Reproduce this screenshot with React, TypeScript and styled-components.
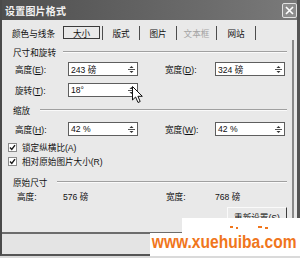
import React from "react";
import styled, { createGlobalStyle } from "styled-components";

const GlobalStyle = createGlobalStyle`
  html, body {
    margin: 0;
    padding: 0;
    background: #dadada;
  }
  body {
    font-family: "Liberation Sans", "Noto Sans CJK SC", sans-serif;
    color: #111;
  }
`;

const Window = styled.div`
  position: relative;
  width: 300px;
  height: 256px;
  box-sizing: border-box;
  background: #e9e9e9;
  border-left: 2px solid #4a4a4a;
  border-right: 3px solid #555;
  border-bottom: 2px solid #555;
  display: flex;
  flex-direction: column;
`;

const TitleBar = styled.div`
  height: 20px;
  flex: none;
  display: flex;
  align-items: center;
  justify-content: space-between;
  padding-left: 3px;
  background: linear-gradient(to right, #4f4f4f, #6c6c6c 70%, #7a7a7a);
`;

const Title = styled.span`
  font-size: 10px;
  font-weight: bold;
  color: #f2f2f2;
  letter-spacing: 0.2px;
`;

const CloseButton = styled.div`
  width: 15px;
  height: 15px;
  box-sizing: border-box;
  border: 1px solid #e2e2e2;
  border-radius: 2px;
  background: #8d8d8d;
  display: flex;
  align-items: center;
  justify-content: center;
`;

const Body = styled.div`
  padding: 0 3px 0 6px;
`;

const TabRow = styled.div`
  display: flex;
  height: 14px;
  margin-top: 6px;
  padding-left: 4px;
  font-size: 8.6px;
`;

const Tab = styled.div<{ $w: number; $sep?: boolean; $off?: boolean; $left?: boolean }>`
  width: ${(p) => p.$w}px;
  box-sizing: border-box;
  display: flex;
  align-items: center;
  justify-content: ${(p) => (p.$left ? "flex-start" : "center")};
  border-right: ${(p) => (p.$sep ? "1px solid #4c4c4c" : "none")};
  color: ${(p) => (p.$off ? "#a4a4a4" : "#111")};
`;

const ActiveBox = styled.div`
  width: 37px;
  height: 13px;
  margin-right: 2px;
  box-sizing: border-box;
  border: 1px solid #3a3a3a;
  display: flex;
  align-items: center;
  justify-content: center;
  align-self: flex-start;
`;

const Panel = styled.div`
  height: 192px;
  box-sizing: border-box;
  padding: 7px 5px 0 0;
  border-right: 2px solid #8a8a8a;
  display: flex;
  flex-direction: column;
`;

const SectionTitle = styled.div<{ $top?: number; $gap?: number }>`
  display: flex;
  align-items: center;
  height: 10px;
  margin-top: ${(p) => p.$top ?? 0}px;
  padding-left: 5px;
  font-size: 8.6px;

  &::after {
    content: "";
    flex: 1;
    margin-left: ${(p) => p.$gap ?? 8}px;
    border-top: 1px solid #a0a0a0;
    border-bottom: 1px solid #fafafa;
  }
`;

const FieldGrid = styled.div<{ $top: number }>`
  display: grid;
  grid-template-columns: 53px 70px 27px 50px 70px;
  grid-auto-rows: 14px;
  row-gap: 7px;
  margin-top: ${(p) => p.$top}px;
  padding-left: 7px;
`;

const Label = styled.span<{ $col?: number }>`
  grid-column: ${(p) => p.$col ?? "auto"};
  align-self: center;
  font-size: 8.6px;
  white-space: nowrap;
`;

const SpinBox = styled.div<{ $col?: number }>`
  grid-column: ${(p) => p.$col ?? "auto"};
  display: flex;
  align-items: center;
  box-sizing: border-box;
  height: 14px;
  border: 1px solid #5e5e5e;
  background: #fff;
`;

const SpinValue = styled.span`
  flex: 1;
  padding-left: 2px;
  font-size: 8.6px;
  white-space: nowrap;
`;

const SpinButtons = styled.div`
  width: 11px;
  height: 12px;
  display: flex;
  align-items: center;
  justify-content: center;
`;

const CheckList = styled.div`
  margin-top: 4px;
  display: flex;
  flex-direction: column;
`;

const CheckRow = styled.label`
  display: flex;
  align-items: center;
  gap: 5px;
  height: 14px;
  font-size: 8.6px;
`;

const CheckBox = styled.span`
  width: 9px;
  height: 9px;
  box-sizing: border-box;
  border: 1px solid #8a8a8a;
  background: #fff;
  display: flex;
  align-items: center;
  justify-content: center;
`;

const InfoGrid = styled.div`
  display: grid;
  grid-template-columns: 46px 103px 49px auto;
  height: 10px;
  margin-top: 3px;
  padding-left: 9px;
  font-size: 8.6px;
  align-items: center;
`;

const ButtonRow = styled.div`
  display: flex;
  justify-content: flex-end;
  margin-top: 7px;
`;

const ResetButton = styled.div`
  width: 60px;
  height: 20px;
  box-sizing: border-box;
  border-top: 1px solid #fafafa;
  border-left: 1px solid #fafafa;
  border-right: 1px solid #3c3c3c;
  border-bottom: 1px solid #3c3c3c;
  display: flex;
  align-items: center;
  justify-content: center;
  font-size: 8.6px;
`;

const Divider = styled.div`
  height: 2px;
  background: #6c6c6c;
`;

const Footer = styled.div`
  flex: 1;
  background: #e4e4e4;
`;

const Cursor = styled.svg`
  position: absolute;
  left: 130px;
  top: 86px;
`;

const Watermark = styled.div`
  position: absolute;
  left: 148px;
  top: 218px;
  width: 150px;
  height: 38px;
  background: #fff;
  clip-path: polygon(32px 0, 150px 0, 150px 38px, 0 38px, 0 15px, 32px 15px);
`;

const WatermarkText = styled.div`
  margin-top: 15px;
  padding-left: 2px;
  line-height: 18px;
  font-size: 17.5px;
  font-weight: bold;
  color: #f0761c;
  white-space: nowrap;
  transform: scaleX(0.89);
  transform-origin: left center;
`;

const Mark = styled.span<{ $x: number; $y: number; $w: number }>`
  position: absolute;
  left: ${(p) => p.$x}px;
  top: ${(p) => p.$y}px;
  width: ${(p) => p.$w}px;
  height: 2px;
  background: #f0761c;
`;

function Spinner() {
  return (
    <SpinButtons>
      <svg width="9" height="11" viewBox="0 0 9 11">
        <path d="M2.5 4 L4.5 2 L6.5 4 Z" fill="#333" />
        <line x1="1" y1="5.5" x2="8" y2="5.5" stroke="#555" strokeWidth="1" />
        <path d="M2.5 7 L4.5 9 L6.5 7 Z" fill="#333" />
      </svg>
    </SpinButtons>
  );
}

function Field({ label, acc, value, col }: { label: string; acc: string; value: string; col?: number }) {
  return (
    <>
      <Label $col={col}>
        {label}(<u>{acc}</u>):
      </Label>
      <SpinBox $col={col ? col + 1 : undefined}>
        <SpinValue>{value}</SpinValue>
        <Spinner />
      </SpinBox>
    </>
  );
}

function Check({ children }: { children: React.ReactNode }) {
  return (
    <CheckRow>
      <CheckBox>
        <svg width="7" height="7" viewBox="0 0 7 7">
          <path d="M1 3.5 L2.8 5.5 L6 1.2" stroke="#1a1a1a" strokeWidth="1.4" fill="none" />
        </svg>
      </CheckBox>
      {children}
    </CheckRow>
  );
}

export default function App() {
  return (
    <>
      <GlobalStyle />
      <Window>
        <TitleBar>
          <Title>设置图片格式</Title>
          <CloseButton>
            <svg width="9" height="9" viewBox="0 0 9 9">
              <path d="M1 1 L8 8 M8 1 L1 8" stroke="#fff" strokeWidth="1.6" />
            </svg>
          </CloseButton>
        </TitleBar>
        <Body>
          <TabRow>
            <Tab $w={51} $left>颜色与线条</Tab>
            <Tab $w={40} $sep>
              <ActiveBox>大小</ActiveBox>
            </Tab>
            <Tab $w={37} $sep>版式</Tab>
            <Tab $w={37} $sep>图片</Tab>
            <Tab $w={40} $sep $off>文本框</Tab>
            <Tab $w={39} $sep>网站</Tab>
          </TabRow>
          <Panel>
            <SectionTitle $gap={7}>尺寸和旋转</SectionTitle>
            <FieldGrid $top={5}>
              <Field label="高度" acc="E" value="243 磅" />
              <span />
              <Field label="宽度" acc="D" value="324 磅" />
              <Field label="旋转" acc="T" value="18°" />
            </FieldGrid>
            <SectionTitle $top={8} $gap={10}>缩放</SectionTitle>
            <FieldGrid $top={7}>
              <Field label="高度" acc="H" value="42 %" />
              <span />
              <Field label="宽度" acc="W" value="42 %" />
            </FieldGrid>
            <CheckList>
              <Check>锁定纵横比(A)</Check>
              <Check>相对原始图片大小(R)</Check>
            </CheckList>
            <SectionTitle $top={9} $gap={10}>原始尺寸</SectionTitle>
            <InfoGrid>
              <span>高度:</span>
              <span>576 磅</span>
              <span>宽度:</span>
              <span>768 磅</span>
            </InfoGrid>
            <ButtonRow>
              <ResetButton>重新设置(S)</ResetButton>
            </ButtonRow>
          </Panel>
        </Body>
        <Divider />
        <Footer />
        <Cursor width="12" height="18" viewBox="0 0 12 18">
          <path
            d="M0.5 0.5 L0.5 14 L3.6 11 L6 16.5 L8.2 15.5 L5.9 10.3 L10.3 10.3 Z"
            fill="#fff"
            stroke="#111"
            strokeWidth="1"
          />
        </Cursor>
        <Watermark>
          <Mark $x={80} $y={8} $w={3} />
          <Mark $x={86} $y={9} $w={2} />
          <Mark $x={108} $y={8} $w={4} />
          <Mark $x={115} $y={9} $w={3} />
          <WatermarkText>www.xuehuiba.com</WatermarkText>
        </Watermark>
      </Window>
    </>
  );
}
